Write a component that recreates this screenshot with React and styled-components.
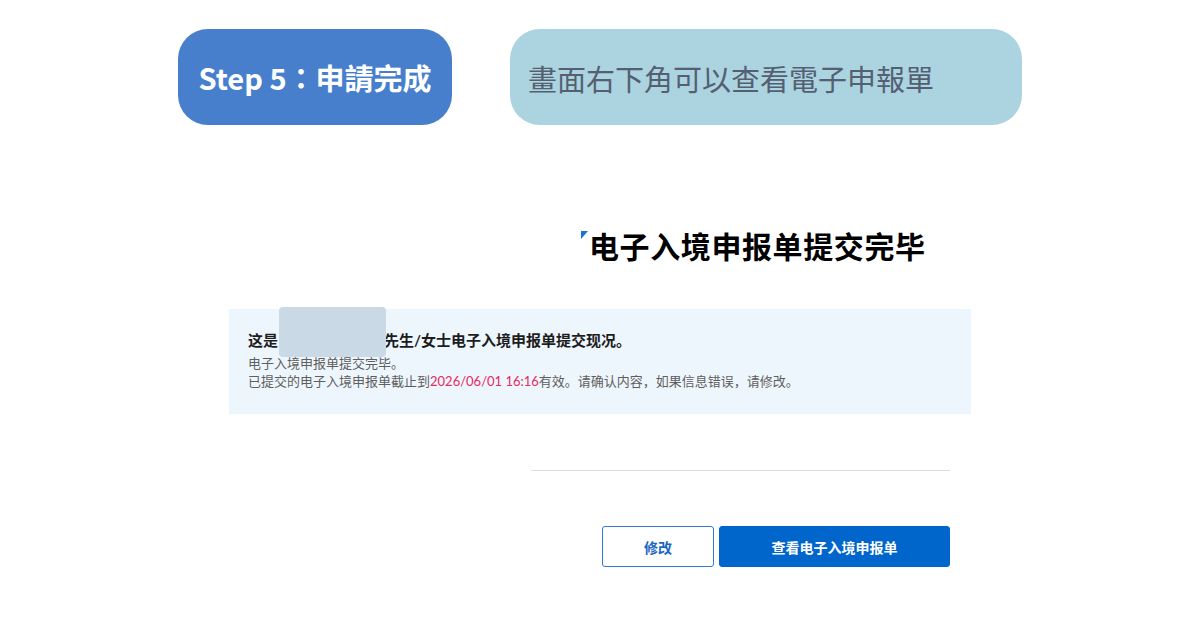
import React from "react";
import styled, { createGlobalStyle } from "styled-components";

const Global = createGlobalStyle`
  html, body { margin: 0; padding: 0; background: #ffffff; }
  body { width: 1200px; height: 630px; overflow: hidden; font-family: "Noto Sans CJK SC", "Noto Sans", sans-serif; }
`;

const Page = styled.div`
  width: 1200px;
  height: 630px;
  display: flex;
  flex-direction: column;
  align-items: center;
`;

const Header = styled.div`
  display: flex;
  gap: 58px;
  padding-top: 29px;
`;

const Pill = styled.div`
  height: 96px;
  width: ${(p) => p.$w}px;
  border-radius: 30px;
  background: ${(p) => p.$bg};
  color: ${(p) => p.$color};
  display: flex;
  align-items: center;
  justify-content: ${(p) => (p.$center ? "center" : "flex-start")};
  padding-left: ${(p) => p.$pl || 0}px;
  padding-top: ${(p) => p.$pt || 0}px;
  box-sizing: border-box;
  font-family: "Noto Sans CJK TC", "Noto Sans", sans-serif;
  font-size: ${(p) => p.$fs}px;
  font-weight: ${(p) => p.$fw};
  white-space: nowrap;
`;

const Content = styled.div`
  width: 742px;
  display: flex;
  flex-direction: column;
  margin-top: 100px;
`;

const TitleRow = styled.div`
  display: flex;
  align-items: flex-start;
  padding-left: 352px;
  height: 40px;
`;

const Corner = styled.span`
  width: 0;
  height: 0;
  border-top: 8px solid #1f6fd8;
  border-right: 7px solid transparent;
  margin-top: 6px;
  margin-right: 1px;
`;

const Title = styled.h1`
  margin: 0;
  font-family: "Noto Sans CJK SC", sans-serif;
  font-weight: 700;
  font-size: 30px;
  letter-spacing: 0.6px;
  line-height: 40px;
  color: #000;
`;

const InfoBox = styled.div`
  margin-top: 44px;
  background: #eef6fd;
  padding: 20px 19px 24px 19px;
  display: flex;
  flex-direction: column;
  font-family: Lato, "Noto Sans CJK SC", sans-serif;
`;

const Lead = styled.div`
  font-size: 15px;
  font-weight: 700;
  color: #1d1d1d;
  line-height: 22px;
  margin-bottom: 3px;
`;

const Hidden = styled.span`
  position: relative;
  display: inline-block;
  width: 106px;
  height: 1em;
`;

const Mask = styled.span`
  position: absolute;
  left: 1px;
  top: -24px;
  width: 107px;
  height: 50px;
  border-radius: 4px;
  background: #c9d9e6;
`;

const Note = styled.div`
  font-size: 13px;
  color: #5e5e5e;
  line-height: 18px;
`;

const Red = styled.span`
  color: #e8285e;
`;

const Divider = styled.div`
  margin: 56px 21px 0 302px;
  height: 1px;
  background: #dedede;
`;

const Actions = styled.div`
  display: flex;
  justify-content: flex-end;
  gap: 5px;
  margin-top: 55px;
  padding-right: 21px;
`;

const Button = styled.button`
  height: 41px;
  width: ${(p) => p.$w}px;
  border-radius: 3px;
  border: 1px solid ${(p) => (p.$primary ? "#0066cc" : "#2f7ad6")};
  background: ${(p) => (p.$primary ? "#0066cc" : "#ffffff")};
  color: ${(p) => (p.$primary ? "#ffffff" : "#1a66c4")};
  font-family: "Noto Sans CJK SC", sans-serif;
  font-weight: 700;
  font-size: 14px;
  display: flex;
  align-items: center;
  justify-content: center;
  padding: 0;
  cursor: pointer;
`;

export default function App() {
  return (
    <Page>
      <Global />
      <Header>
        <Pill $w={274} $bg="#477fcc" $color="#ffffff" $fs={29} $fw={700} $center>
          Step 5：申請完成
        </Pill>
        <Pill $w={512} $bg="#abd4e0" $color="#546072" $fs={29} $fw={400} $pl={18} $pt={2}>
          畫面右下角可以查看電子申報單
        </Pill>
      </Header>
      <Content>
        <TitleRow>
          <Corner />
          <Title>电子入境申报单提交完毕</Title>
        </TitleRow>
        <InfoBox>
          <Lead>
            这是
            <Hidden>
              <Mask />
            </Hidden>
            先生/女士电子入境申报单提交现况。
          </Lead>
          <Note>电子入境申报单提交完毕。</Note>
          <Note>
            已提交的电子入境申报单截止到<Red>2026/06/01 16:16</Red>有效。请确认内容，如果信息错误，请修改。
          </Note>
        </InfoBox>
        <Divider />
        <Actions>
          <Button $w={112}>修改</Button>
          <Button $w={231} $primary>查看电子入境申报单</Button>
        </Actions>
      </Content>
    </Page>
  );
}
